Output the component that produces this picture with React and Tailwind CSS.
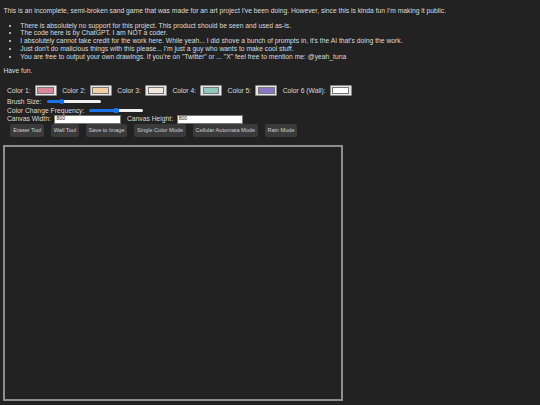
import React from "react";

const colors = [
  { label: "Color 1:", value: "#d9879a" },
  { label: "Color 2:", value: "#f5cfa3" },
  { label: "Color 3:", value: "#f3e8dc" },
  { label: "Color 4:", value: "#8fc7bb" },
  { label: "Color 5:", value: "#8a78c6" },
  { label: "Color 6 (Wall):", value: "#ffffff" },
];

const tools = ["Eraser Tool", "Wall Tool", "Save to Image", "Single Color Mode", "Cellular Automata Mode", "Rain Mode"];

function Swatch({ value }) {
  return (
    <span className="box-border flex h-[11.4px] w-[22px] items-stretch rounded-[1px] border-[0.5px] border-[#8a8a8a] bg-[#e6e6e6] px-[1.6px] py-[1.3px]">
      <span className="flex-1 border-[0.5px] border-[#777]" style={{ background: value }} />
    </span>
  );
}

function Slider({ pct }) {
  return (
    <span className="relative ml-[5px] flex h-[9px] w-[54px] items-center">
      <span className="h-[2.4px] rounded-l-full bg-[#1a73e8]" style={{ width: `${pct}%` }} />
      <span className="h-[2.4px] flex-1 rounded-r-full bg-[#efefef]" />
      <span className="absolute top-[1.7px] h-[5.6px] w-[5.6px] -translate-x-1/2 rounded-full bg-[#1a73e8]" style={{ left: `${pct}%` }} />
    </span>
  );
}

function SizeInput() {
  return (
    <span className="box-border flex h-[8.6px] w-[66.5px] items-center border-[0.5px] border-[#767676] bg-white pl-[1.2px] text-[5px] text-[#111]">
      800
    </span>
  );
}

export default function App() {
  return (
    <div className="h-[405px] w-[540px] overflow-hidden bg-[#222222] px-[3.4px] font-['Liberation_Sans',Arial,sans-serif] text-[6.75px] leading-[1.15] text-[#dcdcdc]">
      <p className="pt-[7px]">
        This is an incomplete, semi-broken sand game that was made for an art project I've been doing. However, since this is kinda fun I'm making it public.
      </p>
      <ul className="my-[6.75px] list-disc pl-[16.9px]">
        <li>There is absolutely no support for this project. This product should be seen and used as-is.</li>
        <li>The code here is by ChatGPT. I am NOT a coder.</li>
        <li>I absolutely cannot take credit for the work here. While yeah... I did shove a bunch of prompts in, it's the AI that's doing the work.</li>
        <li>Just don't do malicious things with this please... I'm just a guy who wants to make cool stuff.</li>
        <li>You are free to output your own drawings. If you're on "Twitter" or ... "X" feel free to mention me: @yeah_tuna</li>
      </ul>
      <p>Have fun.</p>

      <div className="mt-[9.8px] pl-[3.6px]">
        <div className="flex h-[12.4px] items-center">
          {colors.map((c) => (
            <span key={c.label} className="mr-[5.5px] flex items-center">
              <span>{c.label}</span>
              <span className="ml-[4px]">
                <Swatch value={c.value} />
              </span>
            </span>
          ))}
        </div>
        <div className="flex h-[9px] items-center">
          <span>Brush Size:</span>
          <Slider pct={28} />
        </div>
        <div className="flex h-[9px] items-center">
          <span>Color Change Frequency:</span>
          <Slider pct={50} />
        </div>
        <div className="flex h-[8.7px] items-center">
          <span>Canvas Width:</span>
          <span className="ml-[3.5px]">
            <SizeInput />
          </span>
          <span className="ml-[6px]">Canvas Height:</span>
          <span className="ml-[3.5px]">
            <SizeInput />
          </span>
        </div>
        <div className="flex pt-[0.3px]">
          {tools.map((t) => (
            <button
              key={t}
              className="mx-[3.4px] h-[13px] rounded-[2px] bg-[#3a3a3a] px-[2.8px] text-[5.6px] leading-none text-[#cfcfcf]"
            >
              {t}
            </button>
          ))}
        </div>
      </div>

      <div className="mt-[8px] box-border h-[256px] w-[340px] border-[2px] border-[#8e8e8e] bg-[#222222]" />
    </div>
  );
}
